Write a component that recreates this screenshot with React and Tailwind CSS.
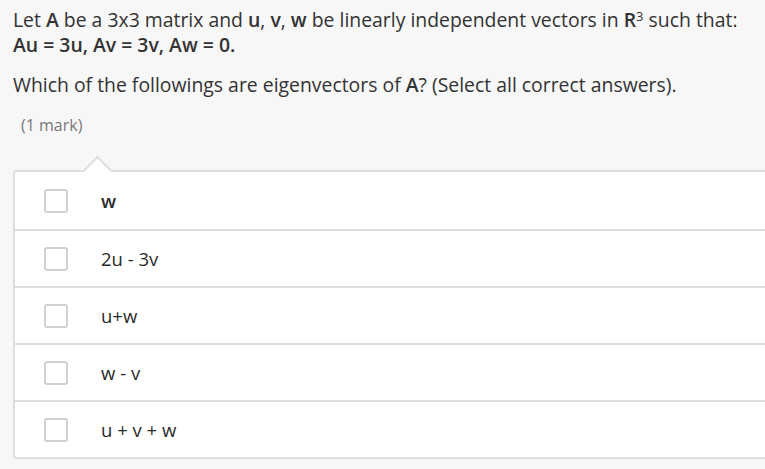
import React from "react";

const options = ["w", "2u - 3v", "u+w", "w - v", "u + v + w"];

export default function App() {
  return (
    <div
      className="min-h-screen bg-[#f7f7f7] text-[#333333] overflow-hidden"
      style={{ fontFamily: '"Open Sans", "Noto Sans", sans-serif' }}
    >
      <div className="pl-[13px] pt-[7px]">
        <p className="text-[19.4px] leading-[25px]">
          Let <b className="font-semibold">A</b> be a 3x3 matrix and{" "}
          <b className="font-semibold">u</b>, <b className="font-semibold">v</b>,{" "}
          <b className="font-semibold">w</b> be linearly independent vectors in{" "}
          <b className="font-semibold">R</b>
          <sup className="text-[13px]">3</sup> such that:
          <br />
          <span className="font-semibold">Au = 3u, Av = 3v, Aw = 0.</span>
        </p>
        <p className="text-[19.4px] leading-[25px] mt-[15px]">
          Which of the followings are eigenvectors of <b className="font-semibold">A</b>? (Select all
          correct answers).
        </p>
        <p className="text-[16px] leading-[22px] text-[#777777] mt-[17px] pl-[8px]">(1 mark)</p>
      </div>

      <div className="relative ml-[13px] mt-[34px] bg-white border-2 border-r-0 border-[#dedede] rounded-tl-[3px] rounded-bl-[3px]">
        <div className="absolute -top-[12px] left-[72px] w-[21px] h-[21px] bg-white border-l-2 border-t-2 border-[#dedede] rotate-45"></div>
        {options.map((o, i) => (
          <div
            key={o}
            className={
              "relative flex items-center h-[57px] pl-[29px] " +
              (i > 0 ? "border-t-2 border-[#dedede]" : "")
            }
          >
            <span className="w-6 h-6 rounded-[3px] border-2 border-[#d0d0d0] bg-white shrink-0"></span>
            <span
              className={
                "ml-[33px] text-[18.5px] text-[#2b2b2b] " + (i === 0 ? "font-semibold" : "")
              }
            >
              {o}
            </span>
          </div>
        ))}
      </div>
    </div>
  );
}
